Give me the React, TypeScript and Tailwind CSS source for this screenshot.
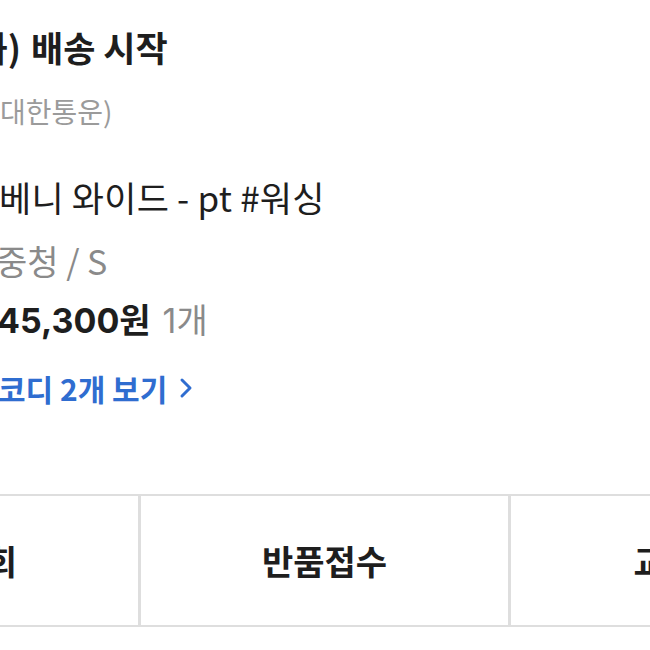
import React from 'react';

const font = { fontFamily: '"Noto Sans CJK KR", "Noto Sans", sans-serif' };
const numFont = { fontFamily: 'Inter, "Noto Sans CJK KR", sans-serif' };

// hidden prefix sits right-aligned in a fixed-width box and spills off the left edge
const Cut: React.FC<{ w: string; text: string }> = ({ w, text }) => (
  <span className={`flex shrink-0 justify-end whitespace-nowrap ${w}`}>{text}</span>
);

const ActionButton: React.FC<{ label: string; last?: boolean }> = ({ label, last }) => (
  <button
    className={`flex h-full w-[370px] shrink-0 items-center justify-center text-[34px] font-bold text-[#1e1e1e] ${
      last ? '' : 'border-r-[3px] border-[#dedede]'
    }`}
  >
    {label}
  </button>
);

export default function App() {
  return (
    <div className="h-[650px] w-[650px] overflow-hidden bg-white" style={font}>
      <div className="flex flex-col pt-[27px]">
        {/* delivery status */}
        <div className="flex h-[40px] items-center text-[35px] font-bold leading-[40px] text-[#1e1e1e]">
          <Cut w="w-[21px]" text="2/27(화)" />
          <span className="ml-[10px] whitespace-nowrap">배송 시작</span>
        </div>
        <div className="mt-[24px] flex h-[40px] items-center text-[28px] leading-[40px] text-[#9b9b9b]">
          <Cut w="w-[0px]" text="(CJ" />
          <span className="whitespace-nowrap">대한통운)</span>
        </div>

        {/* product */}
        <div className="mt-[46px] flex h-[40px] items-center text-[35px] leading-[40px] text-[#1e1e1e]">
          <Cut w="w-[0px]" text="헤" />
          <span className="-ml-[1px] whitespace-nowrap tracking-[0.2px]">베니 와이드 - pt #워싱</span>
        </div>
        <div className="mt-[24px] flex h-[40px] items-center text-[34px] leading-[40px] text-[#8a8a8a]">
          <span className="-ml-[4px] whitespace-nowrap">중청 / S</span>
        </div>
        <div className="mt-[20px] flex h-[40px] items-center leading-[40px]" style={numFont}>
          <span className="-ml-[3px] whitespace-nowrap text-[34px] font-bold text-[#1e1e1e]">45,300원</span>
          <span className="ml-[12px] whitespace-nowrap text-[34px] text-[#8a8a8a]">1개</span>
        </div>
        <div className="mt-[27px] flex h-[40px] items-center text-[30px] font-bold leading-[40px] text-[#2f6dd0]">
          <span className="-ml-[2px] whitespace-nowrap">코디 2개 보기</span>
          <svg className="ml-[12px]" width="14" height="22" viewBox="0 0 14 22" fill="none">
            <path d="M3 3l8 8-8 8" stroke="#2f6dd0" strokeWidth="3" strokeLinecap="round" strokeLinejoin="round" />
          </svg>
        </div>

        {/* actions */}
        <div className="mt-[86px] -ml-[229px] flex h-[133px] border-y-2 border-[#dedede]">
          <ActionButton label="배송조회" />
          <ActionButton label="반품접수" />
          <ActionButton label="교환접수" last />
        </div>
      </div>
    </div>
  );
}
